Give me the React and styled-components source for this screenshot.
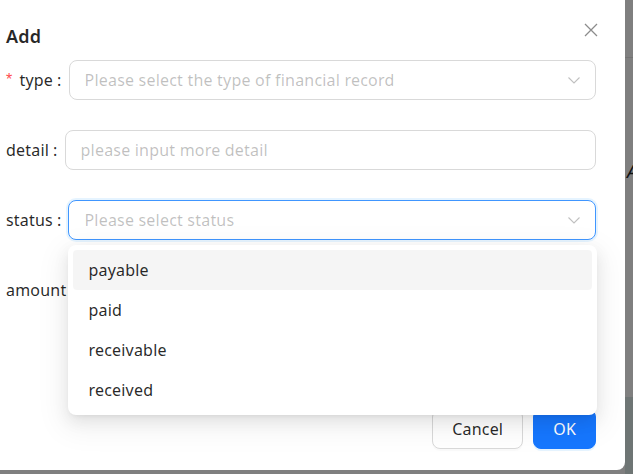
import React from 'react';
import styled, { createGlobalStyle } from 'styled-components';

const GlobalStyle = createGlobalStyle`
    html, body {
        margin: 0;
        padding: 0;
        overflow: hidden;
        background: #7f7f7f;
    }
    * {
        box-sizing: border-box;
    }
`;

const FONT = `"Segoe UI", "Noto Sans", "Liberation Sans", sans-serif`;

const statusOptions = ['payable', 'paid', 'receivable', 'received'];

const App = () => {
    return (
        <>
            <GlobalStyle />
            <Screen>
                <Modal>
                    <CloseButton aria-label="close">
                        <svg width="14" height="14" viewBox="0 0 14 14">
                            <path d="M1 1 L13 13 M13 1 L1 13" stroke="currentColor" strokeWidth="1.3" fill="none" />
                        </svg>
                    </CloseButton>
                    <Title>Add</Title>
                    <Form>
                        <Row>
                            <Label required>type</Label>
                            <SelectBox>
                                <Placeholder>Please select the type of financial record</Placeholder>
                                <Arrow />
                            </SelectBox>
                        </Row>
                        <Row>
                            <Label>detail</Label>
                            <InputBox>
                                <Placeholder>please input more detail</Placeholder>
                            </InputBox>
                        </Row>
                        <Row>
                            <Label>status</Label>
                            <SelectWrap>
                                <SelectBox focused>
                                    <Placeholder>Please select status</Placeholder>
                                    <Arrow />
                                </SelectBox>
                                <Dropdown>
                                    {statusOptions.map((opt, i) => (
                                        <Option key={opt} active={i === 0}>{opt}</Option>
                                    ))}
                                </Dropdown>
                            </SelectWrap>
                        </Row>
                        <Row>
                            <Label>amount</Label>
                            <InputBox />
                        </Row>
                    </Form>
                    <Footer>
                        <Button>Cancel</Button>
                        <Button primary>OK</Button>
                    </Footer>
                </Modal>
                <Backdrop>
                    <BackdropTop />
                    <BackdropMiddle>A</BackdropMiddle>
                    <BackdropBottom />
                </Backdrop>
            </Screen>
        </>
    );
};

const Label = ({ required, children }) => (
    <LabelText>
        {required && <Star>*</Star>}
        {children}
        <Colon>:</Colon>
    </LabelText>
);

const Arrow = () => (
    <ArrowIcon width="12" height="12" viewBox="0 0 12 12">
        <path d="M0.5 3.5 L6 9 L11.5 3.5" stroke="currentColor" strokeWidth="1.1" fill="none" />
    </ArrowIcon>
);

const Screen = styled.div`
    display: flex;
    width: 633px;
    height: 474px;
    overflow: hidden;
    font-family: ${FONT};
    letter-spacing: 0.2px;
`;

const Modal = styled.div`
    position: relative;
    flex: none;
    width: 643px;
    height: 484px;
    margin-left: -18px;
    margin-top: -14px;
    padding: 38px 29px 21px 24px;
    background: #fff;
    border-radius: 8px;
    display: flex;
    flex-direction: column;
`;

const CloseButton = styled.button`
    position: absolute;
    top: 33px;
    right: 23px;
    width: 22px;
    height: 22px;
    border: none;
    background: transparent;
    padding: 0;
    display: flex;
    align-items: center;
    justify-content: center;
    color: rgba(0, 0, 0, 0.45);
    cursor: pointer;
`;

const Title = styled.div`
    font-size: 18px;
    font-weight: 600;
    line-height: 24px;
    color: rgba(0, 0, 0, 0.85);
`;

const Form = styled.div`
    display: flex;
    flex-direction: column;
    gap: 30px;
    margin-top: 12px;
`;

const Row = styled.div`
    display: flex;
    align-items: center;
    height: 40px;
`;

const LabelText = styled.label`
    flex: none;
    display: flex;
    align-items: center;
    font-size: 16px;
    color: rgba(0, 0, 0, 0.85);
    white-space: nowrap;
`;

const Star = styled.span`
    color: #ff4d4f;
    margin-right: 7px;
    font-family: SimSun, "Liberation Sans", sans-serif;
    font-size: 16px;
`;

const Colon = styled.span`
    margin-left: 4px;
    margin-right: 7px;
`;

const SelectWrap = styled.div`
    position: relative;
    flex: 1;
    height: 40px;
`;

const SelectBox = styled.div`
    flex: 1;
    height: 40px;
    display: flex;
    align-items: center;
    padding: 0 15px;
    border: 1px solid ${p => (p.focused ? '#4096ff' : '#d9d9d9')};
    border-radius: 8px;
    box-shadow: ${p => (p.focused ? '0 0 0 2px rgba(5, 145, 255, 0.1)' : 'none')};
    background: #fff;
`;

const InputBox = styled.div`
    flex: 1;
    height: 40px;
    display: flex;
    align-items: center;
    padding: 0 15px;
    border: 1px solid #d9d9d9;
    border-radius: 8px;
    background: #fff;
`;

const Placeholder = styled.span`
    flex: 1;
    font-size: 16px;
    color: rgba(0, 0, 0, 0.25);
    white-space: nowrap;
    overflow: hidden;
`;

const ArrowIcon = styled.svg`
    flex: none;
    color: rgba(0, 0, 0, 0.25);
`;

const Dropdown = styled.div`
    position: absolute;
    top: 45px;
    left: 0;
    right: -1px;
    padding: 5px;
    background: #fff;
    border-radius: 8px;
    box-shadow: 0 6px 16px 0 rgba(0, 0, 0, 0.08), 0 3px 6px -4px rgba(0, 0, 0, 0.12),
        0 9px 28px 8px rgba(0, 0, 0, 0.05);
    z-index: 10;
`;

const Option = styled.div`
    height: 40px;
    display: flex;
    align-items: center;
    padding: 0 15px;
    border-radius: 4px;
    font-size: 16px;
    color: rgba(0, 0, 0, 0.85);
    background: ${p => (p.active ? 'rgba(0, 0, 0, 0.04)' : 'transparent')};
`;

const Footer = styled.div`
    margin-top: auto;
    display: flex;
    justify-content: flex-end;
    gap: 10px;
`;

const Button = styled.button`
    height: 40px;
    padding: 0 19px;
    border-radius: 8px;
    font-family: ${FONT};
    font-size: 16px;
    letter-spacing: 0.2px;
    cursor: pointer;
    border: 1px solid ${p => (p.primary ? '#1677ff' : '#d9d9d9')};
    background: ${p => (p.primary ? '#1677ff' : '#fff')};
    color: ${p => (p.primary ? '#fff' : 'rgba(0, 0, 0, 0.85)')};
    box-shadow: ${p => (p.primary ? '0 2px 0 rgba(5, 145, 255, 0.1)' : '0 2px 0 rgba(0, 0, 0, 0.02)')};
`;

const Backdrop = styled.div`
    flex: 1;
    display: flex;
    flex-direction: column;
`;

const BackdropTop = styled.div`
    height: 58px;
    flex: none;
    background: #7f7f7f;
    border-bottom: 1px solid #737373;
`;

const BackdropMiddle = styled.div`
    flex: none;
    height: 339px;
    background: #7f7f7f;
    padding-top: 101px;
    padding-left: 2px;
    font-size: 18px;
    line-height: 24px;
    color: #111;
    font-style: italic;
    overflow: hidden;
`;

const BackdropBottom = styled.div`
    flex: 1;
    background: #6e7574;
`;

export default App;
